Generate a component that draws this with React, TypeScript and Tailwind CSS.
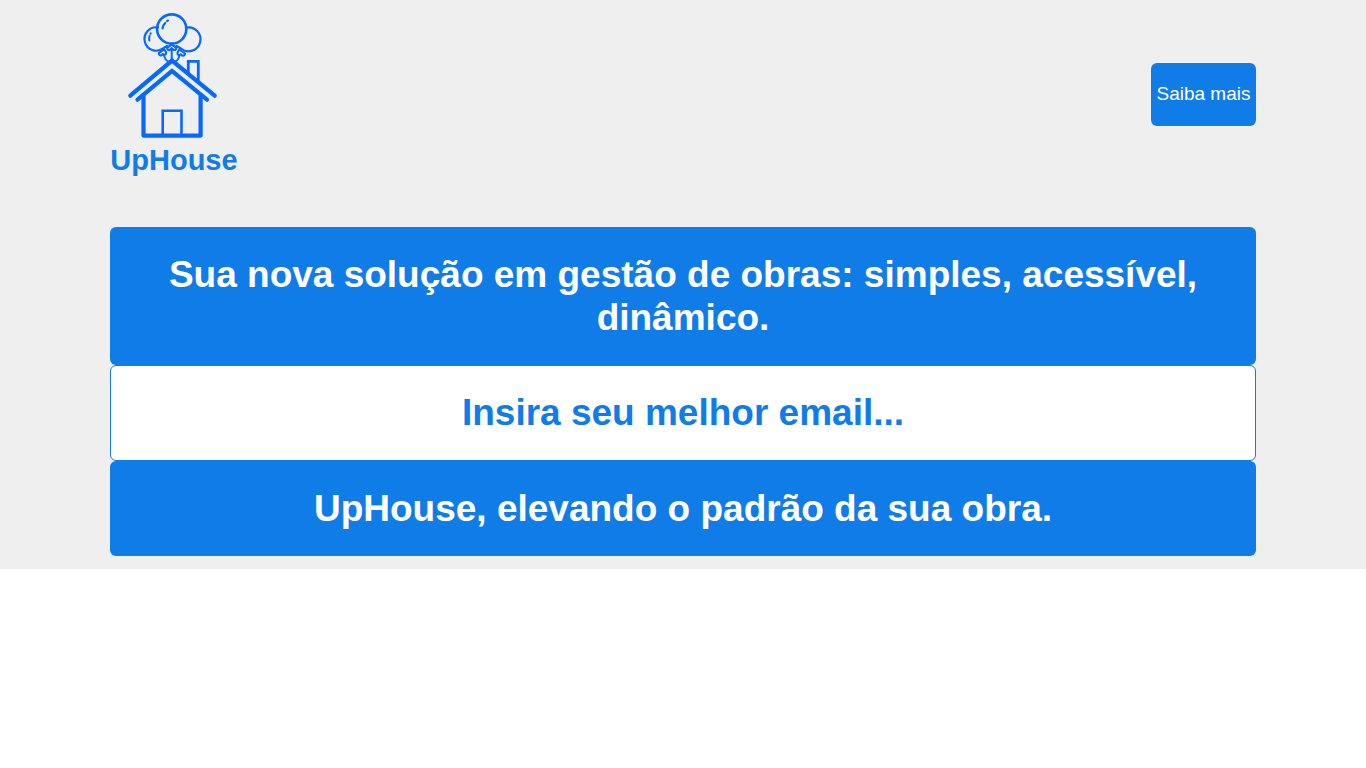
function Logo() {
  return (
    <svg
      viewBox="110 12 128 128"
      className="size-32"
      fill="none"
      stroke="#0568ff"
      strokeLinecap="round"
      strokeLinejoin="round"
      role="img"
      aria-label="UpHouse"
    >
      {/* Side balloons, each open where the middle one covers it */}
      <path d="M158 27.4A11.700 11.700 0 1 0 163 48.500L167 46" strokeWidth="2.2" />
      <path d="M186.500 27.600A11.900 11.900 0 1 1 181 48.500L176.500 46" strokeWidth="2.2" />
      <circle cx="171.700" cy="29" r="14.600" strokeWidth="2.600" />
      {/* Highlights */}
      <path d="M162.500 28.500q.5-3.500 2.700-5.500M167.200 21l.8-.4" strokeWidth="2.200" />
      <path d="M149.300 40.500q-.6-2.300.2-4.800M150.400 33.800l.4-.5" strokeWidth="2" />
      {/* Knots */}
      <path d="M171.700 44.500l-4.500 3.200q.2 3 2.600 2.200l1.900-1.400l1.900 1.400q2.600.6 2.800-2.200z" strokeWidth="2.200" />
      <path d="M164.200 49.200l-5.400 4q.5 3 3 2l1-1.200l1.600.8q2.600-.4 1.400-3z" strokeWidth="2.100" />
      <path d="M179.300 49.500l5.700 4q-.5 3-3 2l-1-1.200l-1.600.8q-2.800-.4-1.600-3z" strokeWidth="2.100" />
      {/* Strings */}
      <path d="M171.700 48.500V60M164.200 55q.4 4.500 4 6.500M179.400 55q-.4 4.500-4 6.500" strokeWidth="2" />
      {/* Chimney */}
      <path d="M188.300 73V61.300h10V81" strokeWidth="2.800" strokeLinejoin="miter" />
      {/* Roof */}
      <path d="M130.300 95.700L172 60.600L214.700 95.700M137.500 99.700L172 71L207 99.700" strokeWidth="4.200" strokeLinejoin="miter" />
      {/* Walls and door */}
      <path d="M143.500 96V135.600H200.600V96" strokeWidth="4.200" />
      <path d="M162.700 134V110.800H181.500V134" strokeWidth="2.600" strokeLinejoin="miter" />
    </svg>
  );
}

export default function App() {
  return (
    <div className="min-h-screen bg-white font-['Liberation_Sans',Arial,sans-serif]">
      <div className="bg-[#efefef] px-[110px] pt-3 pb-[13px]">
        <header className="flex items-center justify-between">
          <div className="flex flex-col items-center gap-[3px] text-[#107ce8]">
            <Logo />
            <h2 className="text-[29px] leading-[34px] font-bold">UpHouse</h2>
          </div>
          <button
            type="button"
            className="h-[63px] min-w-[105px] rounded-md bg-[#107ce8] px-[5px] text-[19px] text-white"
          >
            Saiba mais
          </button>
        </header>
        <main className="mt-[50px] text-center text-[37px] leading-[43px] font-bold">
          <h1 className="rounded-md bg-[#107ce8] px-12 py-[26px] text-white">
            Sua nova solução em gestão de obras: simples, acessível, dinâmico.
          </h1>
          <input
            type="email"
            aria-label="Email"
            placeholder="Insira seu melhor email..."
            className="block w-full rounded-md border border-[#107ce8] bg-white px-6 py-[25px] text-center leading-[44px] text-[#107ce8] outline-none placeholder:text-[#107ce8]"
          />
          <p className="rounded-md bg-[#107ce8] px-6 py-[26px] text-white">
            UpHouse, elevando o padrão da sua obra.
          </p>
        </main>
      </div>
    </div>
  );
}
